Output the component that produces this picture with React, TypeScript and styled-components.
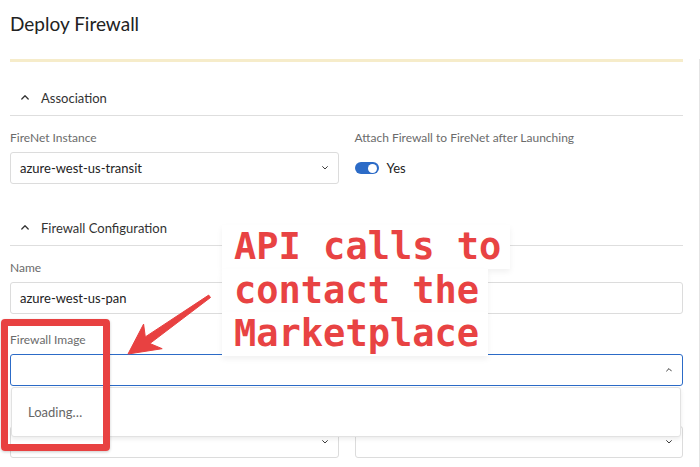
import React from 'react';
import styled, { createGlobalStyle } from 'styled-components';

const GlobalStyle = createGlobalStyle`
  html, body {
    margin: 0;
    padding: 0;
    background: #fff;
  }
  body {
    font-family: 'Lato', 'Noto Sans', sans-serif;
    color: #222;
  }
`;

const Page = styled.div`
  position: relative;
  width: 700px;
  height: 467px;
  overflow: hidden;
  background: #fff;
`;

const Header = styled.div`
  height: 59px;
  box-sizing: border-box;
  padding: 12px 10px 0;
`;

const Title = styled.h1`
  margin: 0;
  font-size: 19px;
  line-height: 24px;
  font-weight: 400;
  color: #222;
`;

const Panel = styled.div`
  width: 700px;
  box-sizing: border-box;
  padding: 0 16px 0 10px;
  border-right: 1px solid #e4e4e4;
  height: 408px;
`;

const FormCard = styled.div`
  border-top: 3px solid #f6ecca;
`;

const SectionHeader = styled.div<{ $gap: number }>`
  margin-top: ${(p) => p.$gap}px;
  height: 36px;
  box-sizing: border-box;
  display: flex;
  align-items: center;
  gap: 12px;
  padding-left: 11px;
  border-bottom: 1px solid #dedede;
  font-size: 13px;
  color: #333;
`;

const SectionBody = styled.div`
  padding-top: 14px;
  display: grid;
  grid-template-columns: 1fr 1fr;
  column-gap: 16px;
  row-gap: 18px;
`;

const Field = styled.div<{ $wide?: boolean }>`
  position: relative;
  display: flex;
  flex-direction: column;
  grid-column: ${(p) => (p.$wide ? '1 / span 2' : 'auto')};
`;

const Label = styled.label`
  display: block;
  min-height: 16px;
  font-size: 12px;
  line-height: 16px;
  color: #6b6b6b;
  margin-bottom: 6px;
`;

const Control = styled.div<{ $focused?: boolean }>`
  height: 32px;
  box-sizing: border-box;
  border: 1px solid ${(p) => (p.$focused ? '#2c6bc7' : '#dcdcdc')};
  border-radius: 3px;
  display: flex;
  align-items: center;
  justify-content: space-between;
  padding: 0 10px 0 9px;
  font-size: 13px;
  color: #222;
  background: #fff;
`;

const ToggleRow = styled.div`
  height: 32px;
  display: flex;
  align-items: center;
  gap: 8px;
  font-size: 13px;
  color: #222;
`;

const Toggle = styled.span`
  width: 24px;
  height: 12px;
  border-radius: 6px;
  background: #2c6bc7;
  position: relative;
  &::after {
    content: '';
    position: absolute;
    right: 2px;
    top: 1.5px;
    width: 9px;
    height: 9px;
    border-radius: 50%;
    background: #fff;
  }
`;

const Menu = styled.div`
  position: absolute;
  left: 1px;
  right: 2px;
  top: 55px;
  height: 50px;
  box-sizing: border-box;
  background: #fff;
  border: 1px solid #e2e2e2;
  border-radius: 3px;
  box-shadow: 0 2px 4px rgba(0, 0, 0, 0.08);
  display: flex;
  align-items: center;
  padding-left: 16px;
  font-size: 13px;
  color: #666;
  z-index: 2;
`;

const Callout = styled.div`
  position: absolute;
  left: 222px;
  top: 225px;
  display: flex;
  flex-direction: column;
  align-items: flex-start;
  z-index: 5;
`;

const CalloutLine = styled.span`
  display: block;
  background: #fff;
  padding: 0 9px 0 12px;
  height: 43.5px;
  line-height: 43.5px;
  font-family: 'DejaVu Sans Mono', 'Liberation Mono', monospace;
  font-weight: 700;
  font-size: 37px;
  color: #e84343;
  white-space: pre;
  box-shadow: 0 3px 6px rgba(0, 0, 0, 0.06);
`;

const Highlight = styled.div`
  position: absolute;
  left: 1px;
  top: 319px;
  width: 109px;
  height: 132px;
  box-sizing: border-box;
  border: 7px solid #e84141;
  border-radius: 4px;
  box-shadow: 0 1px 3px rgba(0, 0, 0, 0.2);
  z-index: 4;
`;

const ArrowLayer = styled.svg`
  position: absolute;
  left: 0;
  top: 0;
  width: 700px;
  height: 467px;
  pointer-events: none;
  z-index: 4;
`;

const Chevron = ({ up, size = 7 }: { up?: boolean; size?: number }) => (
  <svg width={size} height={size * 0.6} viewBox="0 0 10 6" fill="none">
    <path
      d={up ? 'M1 5 L5 1 L9 5' : 'M1 1 L5 5 L9 1'}
      stroke="#333"
      strokeWidth="1.6"
      strokeLinecap="round"
      strokeLinejoin="round"
    />
  </svg>
);

export default function App() {
  return (
    <>
      <GlobalStyle />
      <Page>
        <Header>
          <Title>Deploy Firewall</Title>
        </Header>
        <Panel>
          <FormCard>
            <SectionHeader $gap={18}>
              <Chevron up size={8} />
              <span>Association</span>
            </SectionHeader>
            <SectionBody>
              <Field>
                <Label>FireNet Instance</Label>
                <Control>
                  <span>azure-west-us-transit</span>
                  <Chevron size={6} />
                </Control>
              </Field>
              <Field>
                <Label>Attach Firewall to FireNet after Launching</Label>
                <ToggleRow>
                  <Toggle />
                  <span>Yes</span>
                </ToggleRow>
              </Field>
            </SectionBody>

            <SectionHeader $gap={26}>
              <Chevron up size={8} />
              <span>Firewall Configuration</span>
            </SectionHeader>
            <SectionBody>
              <Field>
                <Label>Name</Label>
                <Control>
                  <span>azure-west-us-pan</span>
                </Control>
              </Field>
              <Field>
                <Label />
                <Control />
              </Field>
              <Field $wide>
                <Label>Firewall Image</Label>
                <Control $focused>
                  <span />
                  <Chevron up size={6} />
                </Control>
                <Menu>Loading…</Menu>
              </Field>
              <Field>
                <Label />
                <Control>
                  <span />
                  <Chevron size={6} />
                </Control>
              </Field>
              <Field>
                <Label />
                <Control>
                  <span />
                  <Chevron size={6} />
                </Control>
              </Field>
            </SectionBody>
          </FormCard>
        </Panel>

        <Highlight />
        <ArrowLayer viewBox="0 0 700 467">
          <polygon
            points="128,354 143.6,324.1 145.3,336.9 208.7,295.1 210.5,297.5 149.9,343.5 162.2,348.7"
            fill="#e84141"
            strokeLinejoin="round"
            stroke="#e84141"
            strokeWidth="1"
          />
        </ArrowLayer>
        <Callout>
          <CalloutLine>API calls to</CalloutLine>
          <CalloutLine>contact the</CalloutLine>
          <CalloutLine>Marketplace</CalloutLine>
        </Callout>
      </Page>
    </>
  );
}
